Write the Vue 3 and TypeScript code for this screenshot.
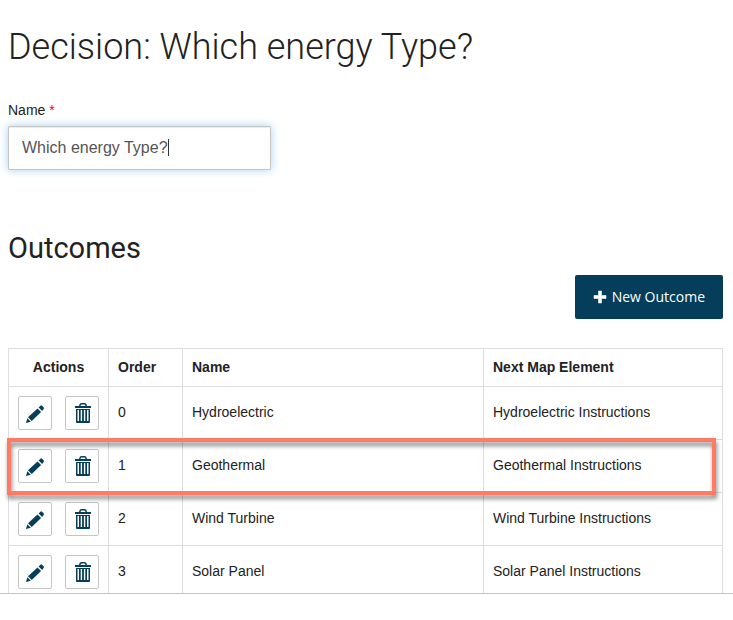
<script setup lang="ts">
import { ref } from 'vue'

interface Outcome {
  order: number
  name: string
  next: string
}

const name = ref('Which energy Type?')

const outcomes = ref<Outcome[]>([
  { order: 0, name: 'Hydroelectric', next: 'Hydroelectric Instructions' },
  { order: 1, name: 'Geothermal', next: 'Geothermal Instructions' },
  { order: 2, name: 'Wind Turbine', next: 'Wind Turbine Instructions' },
  { order: 3, name: 'Solar Panel', next: 'Solar Panel Instructions' },
])

const highlighted = 1
</script>

<template>
  <main class="pane">
    <h1 class="title">Decision: {{ name }}</h1>

    <div class="field">
      <label for="decision-name">Name <span class="required">*</span></label>
      <div class="input-wrap">
        <input id="decision-name" v-model="name" type="text" required />
        <span class="caret" aria-hidden="true"></span>
      </div>
    </div>

    <section>
      <h2 class="subtitle">Outcomes</h2>
      <div class="toolbar">
        <button type="button" class="primary">
          <svg width="14" height="14" viewBox="0 0 14 14" aria-hidden="true">
            <path d="M5.500 1h3v4.500H13v3H8.500V13h-3V8.500H1v-3h4.500z" stroke="#fff" stroke-width=".6" />
          </svg>
          <span>New Outcome</span>
        </button>
      </div>

      <table>
        <colgroup>
          <col class="col-actions" />
          <col class="col-order" />
          <col class="col-name" />
          <col class="col-next" />
        </colgroup>
        <thead>
          <tr>
            <th class="center">Actions</th>
            <th>Order</th>
            <th>Name</th>
            <th>Next Map Element</th>
          </tr>
        </thead>
        <tbody>
          <tr v-for="(outcome, i) in outcomes" :key="outcome.order">
            <td class="actions-cell">
              <div v-if="i === highlighted" class="highlight"></div>
              <div class="actions">
                <button type="button" class="icon-button" :aria-label="`Edit ${outcome.name}`">
                  <svg width="20" height="20" viewBox="0 0 20 20" aria-hidden="true">
                    <path d="M1 20l1.300-4.800 3.500 3.500z" />
                    <path d="M3 14.300L12.500 5.400l3.600 3.600L6.700 18z" />
                    <path d="M13.600 4.400l1.800-1.700q.8-.8 1.600 0l1.600 1.600q.8.8 0 1.600L17.100 7.900z" />
                  </svg>
                </button>
                <button type="button" class="icon-button" :aria-label="`Delete ${outcome.name}`">
                  <svg width="20" height="20" viewBox="0 0 20 20" aria-hidden="true">
                    <path
                      fill-rule="evenodd"
                      d="M3 3h4Q7.500 0 9.500 0h3Q14.500 0 15 3h4v2H3zM8.500 3h5Q13.300 1.500 12.500 1.500h-3Q8.700 1.500 8.500 3z"
                    />
                    <path
                      fill-rule="evenodd"
                      d="M4 6h14v13q0 1-1 1H5q-1 0-1-1zM5.500 7v11H7V7zM8.700 7v11h1.400V7zM11.900 7v11h1.400V7zM15 7v11h1.500V7z"
                    />
                  </svg>
                </button>
              </div>
            </td>
            <td>{{ outcome.order }}</td>
            <td>{{ outcome.name }}</td>
            <td>{{ outcome.next }}</td>
          </tr>
        </tbody>
      </table>
    </section>
  </main>
</template>

<style>
body {
  background: #fff;
}
</style>

<style scoped>
.pane {
  box-sizing: border-box;
  height: calc(100vh - 26px);
  overflow: hidden;
  padding: 25px 10px 0 8px;
  border-bottom: 1px solid #c6c6c6;
  color: #222;
  font: 14px/20px 'Liberation Sans', Arial, sans-serif;
}

.title {
  margin: 0;
  font: 300 36px/44px Roboto, sans-serif;
}

.field {
  margin-top: 31px;
}

label {
  display: block;
}

.required {
  color: #f00;
}

.input-wrap {
  position: relative;
  width: 263px;
  margin-top: 6px;
}

input {
  box-sizing: border-box;
  display: block;
  width: 100%;
  height: 44px;
  padding: 0 13px;
  border: 1px solid #c4c6c8;
  border-radius: 1px;
  outline: none;
  background: #fff;
  box-shadow: inset 0 1px 1px rgba(0, 0, 0, 0.08), 0 0 8px rgba(102, 175, 233, 0.6);
  color: #555;
  font: 16px 'Liberation Sans', Arial, sans-serif;
}

.caret {
  position: absolute;
  top: 13px;
  left: 160px;
  width: 1px;
  height: 17px;
  background: #333;
}

.subtitle {
  margin: 60px 0 0;
  font: 400 29px/36px Roboto, sans-serif;
}

.toolbar {
  display: flex;
  justify-content: flex-end;
  margin-top: 9px;
}

button {
  cursor: pointer;
}

button svg {
  display: block;
  fill: #043e5a;
}

.primary {
  display: flex;
  align-items: center;
  gap: 5px;
  height: 44px;
  padding: 0 18px;
  border: 0;
  border-radius: 2px;
  background: #043e5a;
  color: #fff;
  font: 14px/20px 'Open Sans', sans-serif;
}

.primary svg {
  fill: #fff;
}

table {
  width: 100%;
  margin-top: 29px;
  border-collapse: collapse;
  table-layout: fixed;
}

.col-actions {
  width: 100px;
}

.col-order {
  width: 74px;
}

.col-name {
  width: 301px;
}

th,
td {
  height: 50px;
  padding: 0 9px 2px;
  border: 1px solid #ddd;
  text-align: left;
}

th {
  height: 35px;
  font-weight: 700;
}

.center {
  text-align: center;
}

.actions-cell {
  position: relative;
  height: 52px;
  padding-bottom: 0;
}

.actions {
  display: flex;
  gap: 13px;
}

.icon-button {
  display: flex;
  align-items: center;
  justify-content: center;
  width: 34px;
  height: 34px;
  padding: 0;
  border: 1px solid #c6c6c6;
  border-radius: 2px;
  background: #fff;
}

.highlight {
  position: absolute;
  z-index: 1;
  top: -2px;
  left: -2px;
  box-sizing: border-box;
  width: calc(100vw - 24px);
  height: 57px;
  border: 4px solid #ff7b64;
  filter: drop-shadow(1px 4px 2px rgba(0, 0, 0, 0.45));
  pointer-events: none;
}
</style>
